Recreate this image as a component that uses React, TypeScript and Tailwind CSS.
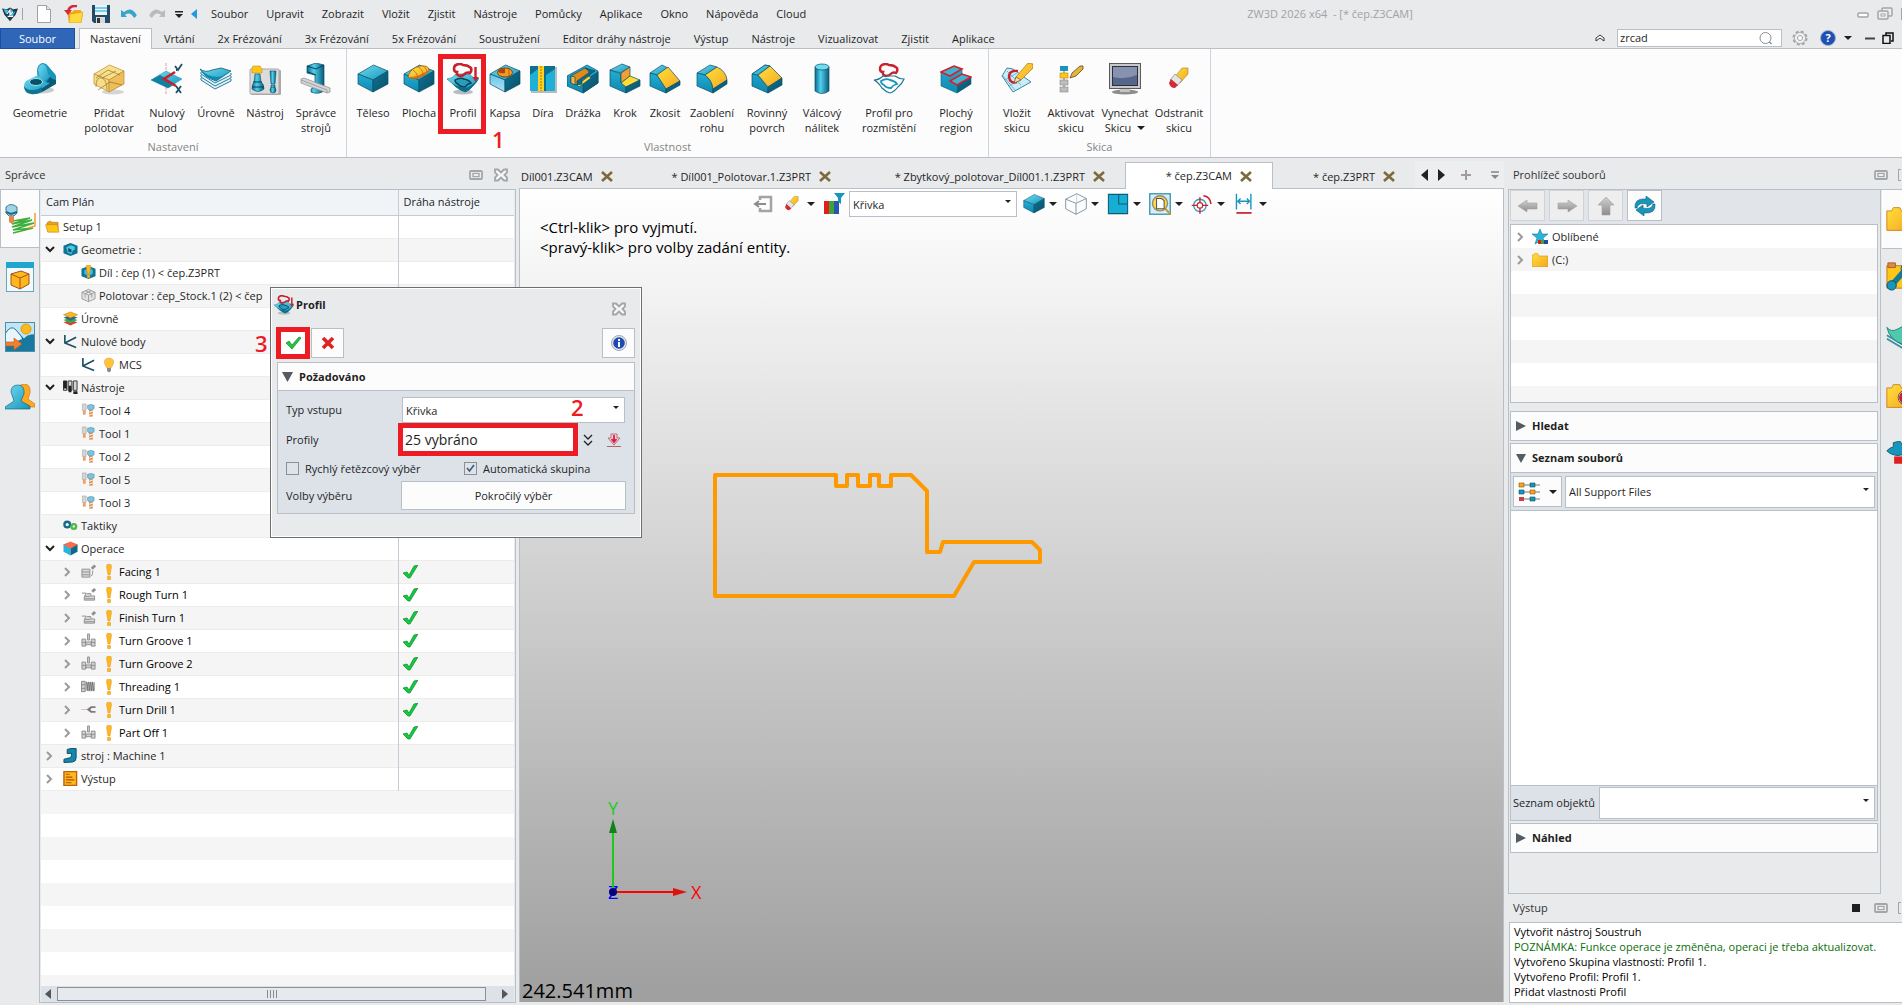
import type { ReactNode } from 'react';

type P = { children?: ReactNode };

/* ---------- shared drawing helpers ---------- */

const Defs = () => (
  <svg className="absolute h-0 w-0" aria-hidden="true">
    <defs>
      <linearGradient id="top" x1="0" y1="0" x2="1" y2="1">
        <stop offset="0" stopColor="#6fdcf2" />
        <stop offset="1" stopColor="#1795ba" />
      </linearGradient>
      <linearGradient id="left" x1="0" y1="0" x2="0" y2="1">
        <stop offset="0" stopColor="#22aed4" />
        <stop offset="1" stopColor="#1187ae" />
      </linearGradient>
      <linearGradient id="right" x1="0" y1="0" x2="1" y2="1">
        <stop offset="0" stopColor="#0f7394" />
        <stop offset="1" stopColor="#0a5068" />
      </linearGradient>
      <linearGradient id="light" x1="0" y1="0" x2="0" y2="1">
        <stop offset="0" stopColor="#5fc6e6" />
        <stop offset="1" stopColor="#b5e0f4" />
      </linearGradient>
      <linearGradient id="gold" x1="0" y1="0" x2="1" y2="1">
        <stop offset="0" stopColor="#ffe13c" />
        <stop offset="1" stopColor="#f5a623" />
      </linearGradient>
      <linearGradient id="pipe" x1="0" y1="0" x2="1" y2="0">
        <stop offset="0" stopColor="#0a6a8a" />
        <stop offset="0.4" stopColor="#4fd0ee" />
        <stop offset="1" stopColor="#0a5a78" />
      </linearGradient>
      <linearGradient id="grey" x1="0" y1="0" x2="0" y2="1">
        <stop offset="0" stopColor="#cfcfcf" />
        <stop offset="1" stopColor="#8d8d8d" />
      </linearGradient>
    </defs>
  </svg>
);

const Ico = ({ children, size = 'size-8' }: P & { size?: string }) => (
  <svg viewBox="0 0 32 32" className={`${size} shrink-0`} aria-hidden="true">
    {children}
  </svg>
);

const Cube = ({ top = 'url(#top)', left = 'url(#left)', right = 'url(#right)', line = '#0a4e68', children }: P & {
  top?: string; left?: string; right?: string; line?: string;
}) => (
  <g stroke={line} strokeWidth="0.7" strokeLinejoin="round">
    <polygon points="16.5,2 31,8 16,17 1,11" fill={top} />
    <polygon points="1,11 16,17 16,29 1,21" fill={left} />
    <polygon points="16,17 31,8 31,21 16,29" fill={right} />
    {children}
  </g>
);

const Caret = ({ className = '' }: { className?: string }) => (
  <svg viewBox="0 0 8 4" className={`h-1 w-2 shrink-0 ${className}`} aria-hidden="true">
    <path d="M0 0h8L4 4z" fill="#1f1f1f" />
  </svg>
);

const Loop = ({ w = 2.2 }: { w?: number }) => (
  <path d="M9 2q4-2 7 0 5 0 8 3 1 3-1 5-2-1-4 0-3 3-6 3-4-1-3-4-3 0-3-3 0-3 2-4z" fill="none" stroke="#c8202c" strokeWidth={w} />
);

const profilArt = (
  <>
    <ellipse cx="16" cy="29" rx="10" ry="2.5" fill="#b9bcbe" />
    <path d="M0 16q5 0 9-5l13 0q4 5 10 4-2 4-6 8-4 5-8 6-4-1-9-5Q4 19 0 16z" fill="url(#top)" stroke="#0f6e8c" strokeWidth="0.6" />
    <path d="M0 16q9 8 18 9 6-1 14-10-2 4-6 8-4 5-8 6-4-1-9-5Q4 19 0 16z" fill="#0c6c8c" />
    <path d="M8 17q5-3 9-1 5 1 7 4-4 1-6 4-5 0-7-3-3-1-3-4z" fill="#2a9dbd" stroke="#0a4258" strokeWidth="1.4" />
    <Loop w={2.600} />
    <path d="M28.500 4v11" stroke="#c8202c" strokeWidth="2.400" />
    <path d="M25.500 14h6l-3 5z" fill="#c8202c" />
  </>
);

/* ---------- ribbon icons ---------- */

const art: Record<string, ReactNode> = {
  geometrie: (
    <>
      <ellipse cx="16" cy="27" rx="14" ry="3.500" fill="#c9cccd" />
      <path d="M13 8q0-6 5-8 4 0 6 3l7 8q2 3 1 9l-12 8-6-9z" fill="#1795ba" />
      <path d="M14 7q1-6 5-6 3 1 4 5 0 4 3 8l-9 6z" fill="url(#top)" />
      <path d="M26 14q3 3 6 3v4L18 29v-4z" fill="#0a5a78" />
      <path d="M2 18l12-6q6 8 12 8l-9 6q-5 4-11 3-6-1-6-6 0-3 2-5z" fill="url(#top)" />
      <path d="M0 23q2 4 8 4 6 0 10-3v5q-6 3-11 2-7-1-7-8z" fill="#0f7394" />
      <ellipse cx="12" cy="19" rx="6.500" ry="3.500" fill="#0a5068" stroke="#9be3f5" />
    </>
  ),
  pridat: (
    <>
      <ellipse cx="20" cy="29" rx="11" ry="2.500" fill="#d5d5d5" />
      <Cube top="#fbe08c" left="#fbdc84" right="#eebd5c" line="#b98b2e">
        <path d="M3 24q0-11 6-9 5 2 5 12M3 15l12-8 12 5M9 15l14-7M5 27l12-8 12 3" fill="none" stroke="#8a7430" />
      </Cube>
    </>
  ),
  nulovy: (
    <>
      <path d="M15 0v32" stroke="#dda0a0" strokeDasharray="3 1" />
      <polygon points="0,17 15,8 31,16 17,25" fill="url(#top)" stroke="#1795ba" strokeWidth="0.5" />
      <polygon points="0,17 9,12 24,21 17,25" fill="#157f9f" />
      <path d="M24 9l-11 7 12 7" fill="none" stroke="#c8202c" strokeWidth="2.600" />
      <path d="M24 3l3 4 4-6M26 7l-1 0M25 23l5 7m0-7l-5 7" stroke="#1d4f66" strokeWidth="1.800" fill="none" />
    </>
  ),
  urovne: (
    <>
      {[15, 12, 9].map((y) => (
        <path key={y} d={`M1 ${y}v2l14 9 16-8v-2`} fill="#dff3f9" stroke="#2b7d99" />
      ))}
      <path d="M0 6q5 4 12 1l9-2 10 3-15 10Q5 14 0 6z" fill="url(#top)" stroke="#0a5a78" strokeWidth="0.8" />
      <path d="M0 6q4 9 16 12l15-10q-8 6-14 6Q6 13 0 6z" fill="#1188aa" />
    </>
  ),
  nastroj: (
    <>
      <rect x="2" y="7" width="30" height="25" rx="1" fill="#aaa" />
      <rect x="1" y="6" width="29" height="25" rx="1" fill="#dcdcdc" stroke="#a8a8a8" />
      <path d="M3 5q0-2 2-2h6l2 3v4H3z" fill="#ffc61a" stroke="#c98a12" strokeWidth="0.6" />
      <path d="M6 11h5l1 8q3 2 3 7-6 5-12 0 0-5 2-7z" fill="url(#pipe)" stroke="#0a4e68" strokeWidth="0.6" />
      <path d="M4 19h9M3 24h12" stroke="#083f52" />
      <path d="M21 8h6l-1 13h-4zM22 22h4v3h-4z" fill="url(#pipe)" stroke="#0a4e68" strokeWidth="0.6" />
      <circle cx="24" cy="27" r="3" fill="url(#pipe)" stroke="#0a4e68" strokeWidth="0.6" />
    </>
  ),
  spravce: (
    <>
      <path d="M7 3l9-3 8 2v26q-6 4-13 1v-3l4-2V12l-8-2z" fill="url(#pipe)" stroke="#0a4e68" strokeWidth="0.7" />
      <path d="M7 3l9 3 8-4M8 9l8 3" stroke="#083f52" fill="none" />
      <path d="M1 16l3-1 26 10v4l-3 1L1 20z" fill="#d5d5d5" stroke="#8a8a8a" strokeWidth="0.7" />
      <path d="M1 17l26 10v3" fill="none" stroke="#a0a0a0" />
    </>
  ),
  teleso: <Cube />,
  plocha: (
    <Cube>
      <path d="M5 14q2-9 12-11 9-1 9 4 0 3-8 7-8 3-13 0z" fill="url(#gold)" stroke="#9a4d0a" />
      <path d="M26 7q0 3-8 7-8 3-13 0 9 0 13-3 5-2 8-4z" fill="#d9741a" stroke="none" />
      <path d="M10 7q4 2 5 8M15 4q5 2 5 9M20 3q4 2 4 6" stroke="#b8620f" fill="none" />
    </Cube>
  ),
  profil: profilArt,
  kapsa: (
    <Cube left="url(#light)">
      <ellipse cx="16" cy="9.500" rx="7.500" ry="4.500" fill="#f39a1f" stroke="#8a3f0a" strokeWidth="1" />
      <path d="M9 9q1-4 7-4v5q-4 1-7-1z" fill="#a54a10" stroke="none" />
      <path d="M20 6v7" stroke="#a54a10" />
    </Cube>
  ),
  dira: (
    <>
      <rect x="4" y="4" width="26" height="26" fill="#b9bcbe" />
      <rect x="3" y="3" width="25" height="25" fill="#0d708f" />
      <path d="M3 12l8-6v22H3zM19 12l9-6v22h-9z" fill="#1fb0d8" />
      <rect x="11" y="3" width="6" height="25" fill="#ffd21f" />
      <path d="M14 3v25" stroke="#a4700f" strokeDasharray="2 1" />
    </>
  ),
  drazka: (
    <g stroke="#0a4e68" strokeWidth="0.700">
      <path d="M0 13L20 2l11 6v12l-15 10L0 23z" fill="url(#left)" />
      <path d="M31 9v11L16 30V19z" fill="url(#right)" />
      <path d="M4 13l14-8 4 2v7l-12 8-6-2z" fill="#e08a1c" />
      <path d="M4 13l4 1v8l-4-2z" fill="#f9b63a" />
      <path d="M10 22l12-9 2 2-12 9z" fill="#ffd83a" />
      <path d="M18 5l10 3-13 9v4l-5 1v-4l13-9z" fill="#0f6a88" />
    </g>
  ),
  krok: (
    <g stroke="#0a4e68" strokeWidth="0.700">
      <path d="M1 7l12-6 8 3-9 6z" fill="url(#top)" />
      <path d="M1 7l11 4v8l5 2v9L1 23z" fill="url(#left)" />
      <path d="M12 10l9-6v9l-9 7z" fill="#f0a030" />
      <path d="M12 20l9-7 10 4-14 7z" fill="#ffdc32" />
      <path d="M17 24l14-7v6l-14 7z" fill="url(#right)" />
    </g>
  ),
  zkosit: (
    <g stroke="#0a4e68" strokeWidth="0.700">
      <path d="M1 10l12-8 6 3-11 7z" fill="url(#top)" />
      <path d="M1 10l7 2 9 13v5L1 23z" fill="url(#left)" />
      <path d="M8 12l11-8 12 14-14 8z" fill="url(#gold)" />
      <path d="M17 26l14-8v4l-14 8z" fill="url(#right)" />
    </g>
  ),
  zaobleni: (
    <g stroke="#0a4e68" strokeWidth="0.700">
      <path d="M1 10l13-8 7 2-12 8z" fill="url(#top)" />
      <path d="M1 10l8 2q7 5 8 14v4L1 23z" fill="url(#left)" />
      <path d="M9 12l12-8q9 4 10 13l-14 9q-1-9-8-14z" fill="url(#gold)" />
      <path d="M17 26l14-9v4l-14 9z" fill="url(#right)" />
    </g>
  ),
  rovinny: (
    <g stroke="#0a4e68" strokeWidth="0.700">
      <path d="M1 11l13-9 5 1L7 12l10 13v5L1 23z" fill="url(#left)" />
      <path d="M1 11l13-9 5 1L7 12z" fill="url(#top)" />
      <path d="M7 12l12-9 12 12-14 9z" fill="url(#gold)" />
      <path d="M17 24l14-9v7l-14 8z" fill="url(#right)" />
    </g>
  ),
  valcovy: (
    <>
      <path d="M9 4v24q7 5 14 0V4z" fill="url(#pipe)" stroke="#0a4e68" strokeWidth="0.700" />
      <ellipse cx="16" cy="4" rx="7" ry="3" fill="#6fdcf2" stroke="#0a4e68" strokeWidth="0.700" />
    </>
  ),
  rozmisteni: (
    <>
      <Loop w={2.400} />
      <path d="M1 17q5 0 9-4h12q4 3 9 3-2 5-6 8-4 5-8 6-4-1-8-5-4-6-8-8z" fill="none" stroke="#1b7896" strokeWidth="1.200" />
      <path d="M8 18q5-3 9-1 5 1 7 4-4 1-6 4-5 0-7-3-3-1-3-4z" fill="none" stroke="#1795ba" strokeWidth="1.800" />
    </>
  ),
  plochy: (
    <>
      <path d="M1 9l13-6 8 3v5l9 3v7l-14 9L1 23z" fill="url(#left)" stroke="#0a5a78" strokeWidth="0.600" />
      <path d="M17 22l14-8v7l-14 9z" fill="url(#right)" />
      <path d="M1 9l13-6 8 3-12 7zM10 18l12-7 9 3-14 8z" fill="#3cb4d2" stroke="#d8202c" strokeWidth="1.600" />
    </>
  ),
  vlozit: (
    <>
      <path d="M1 13l5-8 6 1 18 13-18 10z" fill="#c9ecf8" stroke="#3a87a2" />
      <path d="M4 17l12-7M8 23l14-9M6 8l14 14M2 13l12 14" stroke="#6fb8d0" fill="none" />
      <path d="M17 8q-9-1-9 6 1 7 8 5" fill="none" stroke="#c8202c" strokeWidth="2.400" />
      <path d="M27 0l5 1v4L20 17l-7 3 2-6z" fill="url(#gold)" stroke="#b36b12" strokeWidth="0.700" />
      <path d="M13 20l2-6 5 3z" fill="#f5dcb0" stroke="#5b4a2a" strokeWidth="0.600" />
    </>
  ),
  aktivovat: (
    <>
      <path d="M9 3v26" stroke="#6d6d6d" />
      <rect x="5" y="3" width="8" height="5" fill="#1795ba" />
      <rect x="5" y="10" width="8" height="5" fill="#ffc61a" stroke="#b88410" strokeWidth="0.600" />
      <rect x="5" y="17" width="8" height="5" fill="#bdbdbd" stroke="#8b8b8b" strokeWidth="0.600" />
      <rect x="5" y="24" width="8" height="5" fill="#bdbdbd" stroke="#8b8b8b" strokeWidth="0.600" />
      <path d="M25 3h3v3l-7 7-6 2 2-5z" fill="#e3b53a" stroke="#5b4a1a" strokeWidth="0.800" />
    </>
  ),
  vynechat: (
    <>
      <ellipse cx="16" cy="29" rx="13" ry="2.500" fill="#8d8d8d" />
      <path d="M11 25h10v4H11z" fill="#c4c4c4" />
      <rect x="0.500" y="0.500" width="31" height="25" fill="#c9c9c9" stroke="#5a5a5a" />
      <rect x="3.500" y="3.500" width="25" height="19" fill="#56658a" stroke="#2c3040" />
      <path d="M4 4h24v8q-12 5-24 2z" fill="#8792ae" />
    </>
  ),
  odstranit: (
    <>
      <path d="M19 5h6v6l-8 9-6-5z" fill="url(#gold)" stroke="#a8801c" strokeWidth="0.600" />
      <path d="M12 11l7 6-5 6-7-6z" fill="#e4e4e4" stroke="#777" strokeWidth="0.600" />
      <path d="M8 16l7 6-3 3q-5 0-6-5z" fill="#d02c38" />
    </>
  ),
};

type Tool = { icon: string; label: string[]; w: string; marked?: boolean; menu?: boolean };

const groups: { name: string; tools: Tool[]; w: string }[] = [
  {
    name: 'Nastavení',
    w: 'w-[347px]',
    tools: [
      { icon: 'geometrie', label: ['Geometrie'], w: 'w-20' },
      { icon: 'pridat', label: ['Přidat', 'polotovar'], w: 'w-[58px]' },
      { icon: 'nulovy', label: ['Nulový', 'bod'], w: 'w-[58px]' },
      { icon: 'urovne', label: ['Úrovně'], w: 'w-10' },
      { icon: 'nastroj', label: ['Nástroj'], w: 'w-[58px]' },
      { icon: 'spravce', label: ['Správce', 'strojů'], w: 'w-11' },
    ],
  },
  {
    name: 'Vlastnost',
    w: 'w-[642px]',
    tools: [
      { icon: 'teleso', label: ['Těleso'], w: 'w-[52px]' },
      { icon: 'plocha', label: ['Plocha'], w: 'w-10' },
      { icon: 'profil', label: ['Profil'], w: 'w-12', marked: true },
      { icon: 'kapsa', label: ['Kapsa'], w: 'w-9' },
      { icon: 'dira', label: ['Díra'], w: 'w-10' },
      { icon: 'drazka', label: ['Drážka'], w: 'w-10' },
      { icon: 'krok', label: ['Krok'], w: 'w-11' },
      { icon: 'zkosit', label: ['Zkosit'], w: 'w-9' },
      { icon: 'zaobleni', label: ['Zaoblení', 'rohu'], w: 'w-[58px]' },
      { icon: 'rovinny', label: ['Rovinný', 'povrch'], w: 'w-[52px]' },
      { icon: 'valcovy', label: ['Válcový', 'nálitek'], w: 'w-[58px]' },
      { icon: 'rozmisteni', label: ['Profil pro', 'rozmístění'], w: 'w-[76px]' },
      { icon: 'plochy', label: ['Plochý', 'region'], w: 'w-[58px]' },
    ],
  },
  {
    name: 'Skica',
    w: 'w-[222px]',
    tools: [
      { icon: 'vlozit', label: ['Vložit', 'skicu'], w: 'w-14' },
      { icon: 'aktivovat', label: ['Aktivovat', 'skicu'], w: 'w-[52px]' },
      { icon: 'vynechat', label: ['Vynechat', 'Skicu'], w: 'w-14', menu: true },
      { icon: 'odstranit', label: ['Odstranit', 'skicu'], w: 'w-[52px]' },
    ],
  },
];

/* ---------- title bar, tabs, ribbon ---------- */

const menus = ['Soubor', 'Upravit', 'Zobrazit', 'Vložit', 'Zjistit', 'Nástroje', 'Pomůcky', 'Aplikace', 'Okno', 'Nápověda', 'Cloud'];
const tabs = ['Nastavení', 'Vrtání', '2x Frézování', '3x Frézování', '5x Frézování', 'Soustružení', 'Editor dráhy nástroje', 'Výstup', 'Nástroje', 'Vizualizovat', 'Zjistit', 'Aplikace'];

const CloseGlyph = ({ className = '' }: { className?: string }) => (
  <svg viewBox="0 0 16 14" className={`h-3.5 w-4 shrink-0 ${className}`} aria-hidden="true">
    <path d="M2 1.500h3l3 3 3-3h3v3L11.500 7 14 9.500v3h-3l-3-3-3 3H2v-3L4.500 7 2 4.500z" fill="#f6f6f6" stroke="#a3a6a9" strokeWidth="1.800" />
  </svg>
);

const PinGlyph = () => (
  <svg viewBox="0 0 14 10" className="h-2.5 w-3.5 shrink-0" aria-hidden="true">
    <rect x="1" y="1" width="12" height="8" rx="1" fill="#eee" stroke="#a3a6a9" strokeWidth="1.800" />
    <rect x="4" y="3.500" width="6" height="3" fill="#fff" stroke="#a3a6a9" strokeWidth="1.400" />
  </svg>
);

const TitleBar = () => (
  <header className="flex h-7 shrink-0 items-center">
    <div className="flex w-[203px] shrink-0 items-center pl-0.5">
      <svg viewBox="0 0 20 18" className="mr-1 h-[18px] w-4" aria-hidden="true">
        <path d="M0 2l6 1 4-2 4 2 6-1-3 8-7 8-7-8z" fill="#1f3a4d" />
        <path d="M2 3l6 1-3 5zM9 7l4-5v7l4-4-4 8-3-3z" fill="#38c4ec" />
        <path d="M6 9l4-5v6l4-4M7 12h7" stroke="#fff" strokeWidth="1.500" fill="none" />
      </svg>
      <span className="h-3 w-px bg-[#a3a6a9]" />
      <button aria-label="Nový" className="ml-3.5">
        <svg viewBox="0 0 14 18" className="h-[18px] w-3.5"><path d="M.5.500h9l4 4v13H.5z" fill="#fff" stroke="#9aa3ab" /><path d="M9.500.500v4h4" fill="#dfe5ea" stroke="#9aa3ab" /></svg>
      </button>
      <button aria-label="Otevřít" className="ml-3">
        <svg viewBox="0 0 20 18" className="h-[18px] w-5">
          <path d="M4 7h5l2-2h7v12H6z" fill="#f5a623" />
          <path d="M7 9l13-2-2 11H6z" fill="#ffd83a" stroke="#d99214" strokeWidth="0.600" />
          <path d="M14 1Q6 0 5 7" fill="none" stroke="#d02c38" strokeWidth="2.500" /><path d="M1 5l4 5 4-5z" fill="#d02c38" />
        </svg>
      </button>
      <button aria-label="Uložit" className="ml-2">
        <svg viewBox="0 0 20 20" className="size-5">
          <path d="M1 1h18v18H3l-2-2z" fill="#244a66" />
          <rect x="4" y="1" width="12" height="10" fill="#e9f3f8" /><path d="M4 4h12M4 7h12" stroke="#56c2e0" strokeWidth="1.500" />
          <rect x="5" y="13" width="9" height="6" fill="#d5d9dc" /><rect x="6" y="14" width="3" height="5" fill="#333" />
        </svg>
      </button>
      <button aria-label="Zpět" className="ml-2.5">
        <svg viewBox="0 0 16 10" className="h-2.5 w-4"><path d="M0 1v7h6L4 6q5-4 9 3 4-2 2-4Q10-3 3 3z" fill="#3aa5cc" /></svg>
      </button>
      <button aria-label="Znovu" className="ml-3">
        <svg viewBox="0 0 16 10" className="h-2.5 w-4"><path d="M16 1v7h-6l2-2Q7 2 3 9-1 7 1 5 6-3 13 3z" fill="#b8bcbf" /></svg>
      </button>
      <svg viewBox="0 0 8 7" className="ml-2.5 h-[7px] w-2" aria-hidden="true"><path d="M0 0h8v1.500H0zM0 3h8L4 7z" fill="#222" /></svg>
      <svg viewBox="0 0 6 10" className="ml-2 h-2.5 w-1.5" aria-hidden="true"><path d="M6 0v10L0 5z" fill="#1e9be0" /></svg>
    </div>
    <nav className="flex shrink-0 gap-[18px] pl-2">
      {menus.map((m) => <button key={m}>{m}</button>)}
    </nav>
    <div className="grow pl-48 text-center whitespace-pre text-[#a0a3a6]">ZW3D 2026 x64  - [* čep.Z3CAM]</div>
    <div className="flex w-[240px] shrink-0 items-center justify-end gap-2">
      <svg viewBox="0 0 12 6" className="mt-0.5 h-1.5 w-3"><rect x="1" y="1" width="10" height="4" rx="1" fill="#fff" stroke="#a3a6a9" strokeWidth="1.500" /></svg>
      <svg viewBox="0 0 16 14" className="h-3.5 w-4">
        <rect x="5" y="1" width="10" height="8" rx="1" fill="#eee" stroke="#a3a6a9" strokeWidth="1.500" />
        <rect x="1" y="4" width="10" height="8" rx="1" fill="#eee" stroke="#a3a6a9" strokeWidth="1.500" />
        <rect x="4" y="7" width="4" height="2" fill="#fff" stroke="#a3a6a9" />
      </svg>
      <span className="h-3 w-px bg-[#a3a6a9]" />
    </div>
  </header>
);

const TabBar = () => (
  <div className="flex h-[21px] shrink-0 border-b border-[#b9bfc6]">
    <button className="mr-1 h-[21px] w-[75px] border border-[#1d4fa8] bg-[#2f66b8] text-white">Soubor</button>
    {tabs.map((t, i) => (
      <button key={t} className={i === 0 ? 'mr-px h-[21px] border border-b-0 border-[#b9bfc6] bg-[#fcfcfc] px-2.5' : 'pt-0.5 pr-3 pl-[11px]'}>
        {t}
      </button>
    ))}
    <div className="ml-auto flex items-center">
      <svg viewBox="0 0 10 8" className="mr-3 h-2 w-2.5"><path d="M1 4l4-3 4 3v3L5 4 1 7z" fill="#fff" stroke="#333" /></svg>
      <label className="flex h-[18px] w-[165px] items-center border border-[#b9bfc6] bg-white pr-2">
        <input aria-label="Hledat" defaultValue="zrcad" className="w-full min-w-0 px-0.5 outline-none" />
        <svg viewBox="0 0 14 13" className="h-[13px] w-3.5 shrink-0"><circle cx="6.500" cy="6" r="5.500" fill="none" stroke="#8b8f93" /><path d="M10.500 10l2 2" stroke="#5aa" strokeWidth="1.600" /></svg>
      </label>
      <svg viewBox="0 0 16 16" className="ml-2.5 size-4">
        <circle cx="8" cy="8" r="6.500" fill="none" stroke="#a3a3a3" strokeWidth="2" strokeDasharray="3 2.100" />
        <circle cx="8" cy="8" r="5.500" fill="#f2f2f2" stroke="#a3a3a3" strokeWidth="0.800" /><circle cx="8" cy="8" r="2.500" fill="#fff" stroke="#a3a3a3" />
      </svg>
      <span className="ml-3 flex size-4 items-center justify-center rounded-full border border-[#9fb0c8] bg-[#1f4fb4] font-bold text-white">?</span>
      <Caret className="ml-2" />
      <svg viewBox="0 0 12 12" className="ml-3 size-3"><path d="M1 6.500h10" stroke="#444" strokeWidth="2" /></svg>
      <svg viewBox="0 0 12 12" className="mr-2 ml-1.5 size-3"><path d="M4 3V1h7v8H9M1 3.500h7v8H1z" fill="none" stroke="#111" strokeWidth="1.500" /></svg>
    </div>
  </div>
);

const Ribbon = () => (
  <div className="flex h-[109px] shrink-0 border-b border-[#b9bfc6] bg-[#fcfcfc]">
    {groups.map((g) => (
      <section key={g.name} className={`${g.w} flex shrink-0 flex-col justify-between border-r border-[#cfd4d9] pt-3.5`}>
        <div className="flex">
          {g.tools.map((t) => (
            <button key={t.icon} className={`${t.w} relative flex shrink-0 flex-col items-center`}>
              <Ico>{art[t.icon]}</Ico>
              <span className="mt-2.5 flex flex-col items-center leading-[15px] whitespace-nowrap">
                {t.label.map((l, i) => (
                  <span key={l} className="flex items-center gap-1.5">
                    {l}
                    {t.menu && i === 1 && <Caret />}
                  </span>
                ))}
              </span>
              {t.marked && <span className="absolute -top-[9px] -left-px h-20 w-12 border-[5px] border-[#ed1c24]" />}
              {t.marked && <span className="absolute top-[62px] left-[53px] text-[22px] leading-7 font-semibold text-[#ed1c24]">1</span>}
            </button>
          ))}
        </div>
        <h2 className="pb-0.5 text-center leading-4 text-[#858585]">{g.name}</h2>
      </section>
    ))}
  </div>
);

/* ---------- manager tree ---------- */

const chevron = (open: boolean) =>
  open ? (
    <svg viewBox="0 0 10 7" className="h-[7px] w-2.5"><path d="M1 1l4 4 4-4" fill="none" stroke="#1f1f1f" strokeWidth="2" /></svg>
  ) : (
    <svg viewBox="0 0 7 10" className="ml-px h-2.5 w-[7px]"><path d="M1 1l4 4-4 4" fill="none" stroke="#9b9b9b" strokeWidth="2" /></svg>
  );

const axes = <path d="M4 2v17l24 10M4 19L28 7" fill="none" stroke="#1d4f66" strokeWidth="3.500" />;
const mill = (
  <>
    <path d="M3 2h8v14H3z" fill="#d5d5d5" stroke="#999" />
    <path d="M4 16h6v9H4z" fill="#e8a070" />
    <path d="M14 5q7-4 14 0v6l-3 4h-8l-3-4z" fill="#7cc3dc" stroke="#3d7b92" />
    <path d="M17 15h8v14h-8z" fill="#e08a4a" />
    <path d="M17 20l8-3M17 26l8-3" stroke="#fff" strokeWidth="2" />
  </>
);
const face = (
  <g stroke="#8f8f8f" strokeWidth="2" fill="#d9d9d9">
    <path d="M2 11h17v17H2zM2 17h17M2 23h17" />
    <path d="M22 26q4-4 3-12" fill="none" /><path d="M23 10l7-7" strokeWidth="6" />
  </g>
);
const turn = (
  <g stroke="#8f8f8f" strokeWidth="2" fill="#d9d9d9">
    <path d="M2 13h9l-4 8v7h22v-9h-8v-5h-8M8 25h20M8 20h12" />
    <path d="M24 10l6-6" strokeWidth="6" />
  </g>
);
const groove = (
  <g stroke="#8f8f8f" strokeWidth="2" fill="#d0d0d0">
    <path d="M2 13h8v15H2zM22 13h8v15h-8zM10 19h12v6H10zM14 2h4v13h-4zM2 20h8M22 20h8" />
  </g>
);

const small: Record<string, ReactNode> = {
  folder: (
    <>
      <path d="M4 8l6-4 6 3h12v20H6z" fill="#e8a020" stroke="#a86a10" />
      <path d="M1 12h25l4 16H6z" fill="#ffc61a" stroke="#b87812" />
    </>
  ),
  geom: (
    <>
      <path d="M1 8l15-6 15 6v16l-15 6-15-6z" fill="#0f7394" />
      <path d="M7 11l10-4 8 3v6l-4 2-3 8-8-3z" fill="#4fc8e6" /><path d="M11 13l7 3v7l-7-3z" fill="#0b5672" />
    </>
  ),
  part: (
    <>
      <path d="M1 8l15-6 15 6v16l-15 6-15-6z" fill="#0f7394" />
      <path d="M7 11l10-4 8 3v9l-9 4-9-4z" fill="#3cc0e0" />
      <path d="M12 0h8l1 4-3 15h-4L11 4zM13 21h6v6h-6z" fill="#ffb81c" stroke="#d98a0a" />
    </>
  ),
  stock: <path d="M2 9l14-6 14 6v14l-14 6-14-6zM2 9l14 6 14-6M16 15v14M9 6l14 6v8M22 6L9 12v8" fill="#e2e2e2" stroke="#9b9b9b" strokeWidth="2" />,
  levels: (
    <>
      <path d="M1 24l15-5 15 5-15 7z" fill="#d8402a" /><path d="M1 19l15-5 15 5-15 7z" fill="#35a852" />
      <path d="M1 14l15-5 15 5-15 7z" fill="#2a6a90" /><path d="M1 8l15-6 15 6-15 7z" fill="#ffb81c" stroke="#a86a10" />
    </>
  ),
  axes,
  tools: (
    <>
      <path d="M1 2h7v20H1zM11 2h8v20h-8zM22 2h8v20h-8z" fill="#d6d6d6" stroke="#333" strokeWidth="2" />
      <path d="M1 2h7v16H1zM12 12h6v14h-6zM22 24h9v6h-9z" fill="#222" />
    </>
  ),
  mill,
  tactics: (
    <>
      <circle cx="9" cy="14" r="6" fill="none" stroke="#146c88" strokeWidth="5" />
      <circle cx="23" cy="18" r="5" fill="none" stroke="#4cb848" strokeWidth="5" />
    </>
  ),
  operace: (
    <>
      <path d="M1 8l15-6 15 6-15 8z" fill="#ff6a4a" stroke="#b8402a" />
      <path d="M1 8l15 8v15L1 23z" fill="#2ab4dc" /><path d="M31 8l-15 8v15l15-8z" fill="#0f6a8a" />
    </>
  ),
  facing: face,
  rough: turn,
  groove,
  thread: (
    <>
      <path d="M1 5h8v22H1zM1 12h8M1 20h8" fill="#ccc" stroke="#888" strokeWidth="2" />
      <path d="M10 7h20v18H10z" fill="#b0b0b0" /><path d="M12 6l3 20m1-20l3 20m1-20l3 20m1-20l3 20" stroke="#6d6d6d" strokeWidth="2" />
    </>
  ),
  drill: (
    <>
      <path d="M1 16h13" stroke="#e8b8a0" strokeWidth="2" />
      <path d="M12 16l9-7h10v4h-8l-3 3 3 3h8v4H21z" fill="#7d7d7d" />
    </>
  ),
  machine: <path d="M9 3l8-2h11v20q0 8-8 9L2 31v-7l12-3q4-1 4-5v-5l-9 1z" fill="#1488ab" stroke="#0a4e68" strokeWidth="2" />,
  output: (
    <>
      <path d="M2 1h27v30H2z" fill="#ffb81c" stroke="#c0600a" strokeWidth="3" />
      <path d="M6 7h8M6 13h14M6 19h18M6 25h12" stroke="#b0500a" strokeWidth="2.500" />
    </>
  ),
  bulb: (
    <>
      <path d="M16 2q11 1 9 11l-4 8H11l-4-8Q5 3 16 2z" fill="#ffc23a" stroke="#e09a1a" />
      <path d="M12 22h8v6l-4 3-4-3z" fill="#8d8d8d" />
    </>
  ),
  warn: <path d="M12 1h8l1 4-3 17h-4L11 5zM13 25h6v6h-6z" fill="#ffb81c" stroke="#e0901a" />,
};

type Row = { label: string; icon: string; depth: number; open?: boolean; flag?: string; done?: boolean };

const rows: Row[] = [
  { label: 'Setup 1', icon: 'folder', depth: 0 },
  { label: 'Geometrie :', icon: 'geom', depth: 1, open: true },
  { label: 'Díl : čep (1) < čep.Z3PRT', icon: 'part', depth: 2 },
  { label: 'Polotovar : čep_Stock.1 (2) < čep', icon: 'stock', depth: 2 },
  { label: 'Úrovně', icon: 'levels', depth: 1 },
  { label: 'Nulové body', icon: 'axes', depth: 1, open: true },
  { label: 'MCS', icon: 'axes', depth: 2, flag: 'bulb' },
  { label: 'Nástroje', icon: 'tools', depth: 1, open: true },
  { label: 'Tool 4', icon: 'mill', depth: 2 },
  { label: 'Tool 1', icon: 'mill', depth: 2 },
  { label: 'Tool 2', icon: 'mill', depth: 2 },
  { label: 'Tool 5', icon: 'mill', depth: 2 },
  { label: 'Tool 3', icon: 'mill', depth: 2 },
  { label: 'Taktiky', icon: 'tactics', depth: 1 },
  { label: 'Operace', icon: 'operace', depth: 1, open: true },
  { label: 'Facing 1', icon: 'facing', depth: 2, open: false, flag: 'warn', done: true },
  { label: 'Rough Turn 1', icon: 'rough', depth: 2, open: false, flag: 'warn', done: true },
  { label: 'Finish Turn 1', icon: 'rough', depth: 2, open: false, flag: 'warn', done: true },
  { label: 'Turn Groove 1', icon: 'groove', depth: 2, open: false, flag: 'warn', done: true },
  { label: 'Turn Groove 2', icon: 'groove', depth: 2, open: false, flag: 'warn', done: true },
  { label: 'Threading 1', icon: 'thread', depth: 2, open: false, flag: 'warn', done: true },
  { label: 'Turn Drill 1', icon: 'drill', depth: 2, open: false, flag: 'warn', done: true },
  { label: 'Part Off 1', icon: 'groove', depth: 2, open: false, flag: 'warn', done: true },
  { label: 'stroj : Machine 1', icon: 'machine', depth: 1, open: false },
  { label: 'Výstup', icon: 'output', depth: 1, open: false },
];

const DockTitle = ({ title, children }: { title: string } & P) => (
  <div className="flex h-7 shrink-0 items-center justify-between">
    <h2 className="text-[#333]">{title}</h2>
    <div className="flex items-center gap-2.5">{children}</div>
  </div>
);

const SideTabs = () => (
  <div className="flex w-[39px] shrink-0 flex-col">
    <button aria-label="Plán" className="flex h-[58px] items-center justify-center border-b border-l border-[#b9bfc6] bg-[#fcfcfc]">
      <svg viewBox="0 0 32 32" className="size-8">
        <path d="M9 18l17-3-18 6 20-4-20 7 22-4-21 7 20-2-20 5" fill="none" stroke="#3fae3a" strokeWidth="1.600" />
        <path d="M31 10v13l-7 2" fill="none" stroke="#f0a030" strokeWidth="1.500" />
        <path d="M2 4q5-5 11 0v6l-3 3H5l-3-3z" fill="#9ed3e8" stroke="#3d7b92" /><path d="M2 9l5 2 6-2" fill="none" stroke="#1d6a88" strokeWidth="2" /><path d="M5 13h5v6l-2 2-3-2z" fill="#e08a4a" />
      </svg>
    </button>
    <button aria-label="Model" className="mt-3.5 flex h-[30px] justify-center">
      <svg viewBox="0 0 28 30" className="h-[30px] w-7">
        <rect x="0.500" y="0.500" width="27" height="29" fill="#f2fafd" stroke="#6aa7bd" /><rect width="28" height="6" fill="#1fa6cc" />
        <path d="M5 12l10-3 8 3v10l-9 5-9-4z" fill="#ffb81c" stroke="#a8501a" /><path d="M5 12l9 4 9-4M14 16v11" fill="none" stroke="#a8501a" />
      </svg>
    </button>
    <button aria-label="Scéna" className="mt-[30px] flex h-[30px] justify-center">
      <svg viewBox="0 0 30 30" className="size-[30px]">
        <rect width="30" height="30" fill="#bfe6f5" /><path d="M0 12q6-10 11-4t8 9q4-5 11-4v17H0z" fill="#1779a0" />
        <path d="M0 12q6-10 11-4t6 9q-4 2-8 3l-9 0z" fill="#e8f5fa" />
        <path d="M0 12q6-10 11-4t8 9q4-5 11-4" fill="none" stroke="#2b7d99" /><circle cx="21" cy="7" r="5" fill="#ffb81c" stroke="#e09a1a" />
        <path d="M0 20h9v-4l8 6-8 6v-4H0z" fill="#f08030" stroke="#c05a10" strokeWidth="0.600" />
        <rect x="0.500" y="0.500" width="29" height="29" fill="none" stroke="#4d8ea6" />
      </svg>
    </button>
    <button aria-label="Uživatel" className="mt-8 flex h-[26px] justify-center">
      <svg viewBox="0 0 30 26" className="h-[26px] w-[30px]">
        <path d="M13 8q0-8 6-8 7 0 6 9l-2 6 7 5v3H15z" fill="#ffa820" stroke="#c07010" strokeWidth="0.600" />
        <path d="M6 8q0-7 7-7t6 9l-3 7 9 5v3H0v-2l9-6z" fill="url(#top)" stroke="#0a5a78" strokeWidth="0.600" />
      </svg>
    </button>
  </div>
);

const Manager = () => (
  <aside className="flex w-[519px] shrink-0 flex-col pt-[3px]">
    <div className="pr-2.5 pl-[5px]">
      <DockTitle title="Správce"><PinGlyph /><CloseGlyph /></DockTitle>
    </div>
    <div className="mr-[3px] mb-0.5 flex min-h-0 grow border-t border-r border-[#b9bfc6]">
      <SideTabs />
      <div className="flex min-w-0 grow flex-col border-b border-l border-[#b9bfc6] pr-px pl-px">
        <table className="w-full table-fixed border-collapse text-left">
          <thead>
            <tr className="h-[25px] border-b border-[#c5ccd3] bg-[#f0f4f7]">
              <th className="w-[357px] border-r border-[#c5ccd3] pl-[5px] font-normal">Cam Plán</th>
              <th className="pl-[5px] font-normal">Dráha nástroje</th>
            </tr>
          </thead>
          <tbody>
            {rows.map((r) => (
              <tr key={r.label} className="h-[23px] border-b border-[#ececec] odd:bg-white even:bg-[#f5f5f5]">
                <td className="overflow-hidden border-r border-[#c5ccd3] p-0">
                  <div className={`flex items-center whitespace-nowrap ${r.depth === 2 ? 'pl-[22px]' : 'pl-1'}`}>
                    {r.depth > 0 && <span className="w-[18px] shrink-0">{r.open !== undefined && chevron(r.open)}</span>}
                    <span className="w-[18px] shrink-0"><Ico size="size-[15px]">{small[r.icon]}</Ico></span>
                    {r.flag && <span className="flex w-5 shrink-0 justify-center"><Ico size="size-4">{small[r.flag]}</Ico></span>}
                    <span className={r.flag === 'warn' ? 'text-black' : ''}>{r.label}</span>
                  </div>
                </td>
                <td className="p-0 pl-1">
                  {r.done && (
                    <svg viewBox="0 0 15 14" className="h-3.5 w-[15px]"><path d="M0 8l4-1 2 3 5-9 4-1-8 13H5z" fill="#10cc3c" stroke="#0a8a2a" strokeWidth="0.700" /></svg>
                  )}
                </td>
              </tr>
            ))}
          </tbody>
        </table>
        <div className="grow bg-[repeating-linear-gradient(#f5f5f5_0_23px,#fff_23px_46px)]" />
        <div className="flex h-4 shrink-0 items-center justify-between bg-[#dde2e9] px-1">
          <svg viewBox="0 0 6 10" className="h-2.5 w-1.5"><path d="M6 0v10L0 5z" fill="#555" /></svg>
          <div className="mr-4 ml-1.5 flex h-3.5 grow items-center justify-center gap-0.5 border border-[#8b9096] bg-[#e6e9ed]">
            {[0, 1, 2, 3].map((i) => <span key={i} className="h-2 w-px bg-[#888]" />)}
          </div>
          <svg viewBox="0 0 6 10" className="mr-0.5 h-2.5 w-1.5"><path d="M0 0v10l6-5z" fill="#555" /></svg>
        </div>
      </div>
    </div>
  </aside>
);

/* ---------- viewport ---------- */

const docs = [
  { name: 'Díl001.Z3CAM', w: 'w-[104px] pl-0.5', active: false },
  { name: '* Díl001_Polotovar.1.Z3PRT', w: 'w-[228px] justify-end', active: false },
  { name: '* Zbytkový_polotovar_Díl001.1.Z3PRT', w: 'w-[274px] justify-end', active: false },
  { name: '* čep.Z3CAM', w: 'w-[148px] justify-end', active: true },
  { name: '* čep.Z3PRT', w: 'w-[142px] justify-end', active: false },
];

const DocTabs = () => (
  <div className="flex h-7 shrink-0 border-b border-[#b9bfc6]">
    {docs.map((d) => (
      <div key={d.name} className={`${d.w} flex shrink-0 items-center gap-2 pr-5 whitespace-nowrap ${d.active ? 'mt-px h-[27px] border border-b-0 border-[#b9bfc6] bg-white' : 'pt-1'}`}>
        <span>{d.name}</span>
        <button aria-label={`Zavřít ${d.name}`}>
          <svg viewBox="0 0 12 11" className="h-[11px] w-3"><path d="M1 1l10 9M11 1L1 10" stroke="#7d6a3c" strokeWidth="2.600" /></svg>
        </button>
      </div>
    ))}
    <div className="flex grow items-center bg-[#eceef0] pl-1.5">
      <svg viewBox="0 0 7 12" className="h-3 w-[7px]"><path d="M7 0v12L0 6z" fill="#222" /></svg>
      <svg viewBox="0 0 7 12" className="ml-2.5 h-3 w-[7px]"><path d="M0 0v12l7-6z" fill="#222" /></svg>
      <svg viewBox="0 0 10 10" className="ml-4 size-2.5"><path d="M5 0v10M0 5h10" stroke="#a39c9c" strokeWidth="2" /></svg>
      <svg viewBox="0 0 8 8" className="ml-5 size-2"><path d="M0 1h8" stroke="#a39c9c" strokeWidth="2" /><path d="M0 4h8L4 8z" fill="#8d8686" /></svg>
    </div>
  </div>
);

const viewIcons: ReactNode[] = [
  <Cube key="s" />,
  <g key="w" stroke="#6d8494" strokeWidth="1.200" strokeLinejoin="round">
    <path d="M17 1l14 7v15l-15 8L1 23V9z" fill="#fdfdfd" />
    <path d="M1 9l15 6 15-7M16 15v16" fill="none" />
    <path d="M17 1v14" stroke="#c3ccd2" />
  </g>,
  <g key="l"><path d="M2 2h28v28H2z" fill="#17aed4" stroke="#0a5a78" strokeWidth="1.500" /><path d="M17 2v14h13" fill="none" stroke="#0a5a78" strokeWidth="1.500" /></g>,
  <g key="z">
    <path d="M1 1h30v30H1z" fill="#d9eff7" stroke="#4d9fba" strokeWidth="2.400" />
    <circle cx="16" cy="15" r="11" fill="#ffd83a" stroke="#8b8b8b" strokeWidth="2" /><path d="M11 8h7l4 3v12H11z" fill="#fff" stroke="#555" strokeWidth="1.500" /><path d="M24 23l7 8" stroke="#c79a2a" strokeWidth="3" />
  </g>,
  <g key="t" fill="none">
    <circle cx="13" cy="18" r="9" stroke="#3d9cba" strokeWidth="2" /><circle cx="13" cy="18" r="4" stroke="#c8202c" strokeWidth="1.600" />
    <path d="M13 6v8M13 22v8M1 18h8M17 18h8" stroke="#c8202c" strokeWidth="2" /><path d="M18 4q10 1 11 12" stroke="#c8202c" strokeWidth="2.400" />
  </g>,
  <g key="d" fill="none">
    <path d="M5 1v23M26 1v23M7 12h17M11 8l-4 4 4 4M20 8l4 4-4 4" stroke="#1795ba" strokeWidth="2" />
    <path d="M5 29h22" stroke="#c8202c" strokeWidth="2.500" />
  </g>,
];

const SelectBox = ({ label, value, className = '', id }: { label: string; value: string; className?: string; id?: string }) => (
  <div className={`relative ${className}`}>
    <select id={id} aria-label={label} className="size-full appearance-none border border-[#b9bfc6] bg-white px-[3px] pt-px outline-none">
      <option>{value}</option>
    </select>
    <svg viewBox="0 0 6 3" className="pointer-events-none absolute top-1/2 right-1.5 -mt-1 h-[3px] w-1.5"><path d="M0 0h6L3 3z" fill="#222" /></svg>
  </div>
);

const Viewport = () => (
  <main className="flex min-w-0 grow flex-col pt-[3px]">
    <DocTabs />
    <div className="relative mb-[3px] grow border-r border-l border-[#b9bfc6] bg-linear-to-b from-white to-[#9f9f9f]">
      <div className="flex h-7 items-center pt-0.5 pl-[233px]">
        <svg viewBox="0 0 20 18" className="h-[18px] w-5"><path d="M7 5V2h11v14H7v-3" fill="none" stroke="#a3a3a3" strokeWidth="2.500" /><path d="M13 9H3M6 6L2 9l4 3" fill="none" stroke="#8d8d8d" strokeWidth="2" /></svg>
        <button aria-label="Guma" className="ml-2 flex items-center gap-1"><Ico size="size-[22px]">{art.odstranit}</Ico><Caret /></button>
        <svg viewBox="0 0 22 22" className="mr-1 ml-2 size-[22px]">
          <path d="M1 8h5v13H1z" fill="#e01e1e" /><path d="M6 8h5v13H6z" fill="#3da33a" /><path d="M11 8h5v13h-5z" fill="#2a55b0" />
          <path d="M11 0h11l-4 5v6l-3-2V5z" fill="#1795ba" />
        </svg>
        <SelectBox label="Filtr entit" value="Křivka" className="h-[26px] w-[168px]" />
        <div className="ml-1.5 flex gap-1">
          {viewIcons.map((v, i) => (
            <button key={i} aria-label={`Zobrazení ${i + 1}`} className="flex items-center gap-1 pr-1">
              <Ico size="size-[22px]">{v}</Ico>
              <Caret />
            </button>
          ))}
        </div>
      </div>
      <div className="pl-5 text-[15px] leading-5 text-black">
        <p>&lt;Ctrl-klik&gt; pro vyjmutí.</p>
        <p>&lt;pravý-klik&gt; pro volby zadání entity.</p>
      </div>
      {/* selected profile curve */}
      <svg viewBox="0 0 340 140" className="absolute top-[276px] left-[185px] h-[140px] w-[340px]" aria-hidden="true">
        <path
          d="M10 10H131V21H142V10H153V21H165V10H174V21H186V10H206L222 26V87H235L238 77H327L335 85V97H269L249 131H10z"
          fill="none" stroke="#ff9900" strokeWidth="4" strokeLinejoin="round"
        />
      </svg>
      {/* axis triad */}
      <svg viewBox="0 0 120 130" className="absolute bottom-20 left-[81px] h-[130px] w-[120px] text-[18px]" aria-hidden="true">
        <text x="7" y="107" fill="#0000ff" className="font-['Open_Sans',sans-serif]">Z</text>
        <path d="M12 100V35" stroke="#1fc81f" strokeWidth="2" />
        <path d="M12 27l4 14H8z" fill="#14801a" />
        <path d="M12 100h65" stroke="#ff0000" strokeWidth="2" />
        <path d="M86 100l-14 4v-8z" fill="#e01010" />
        <circle cx="12" cy="100" r="4" fill="#000080" />
        <text x="7" y="23" fill="#22cc22" className="font-['Open_Sans',sans-serif]">Y</text>
        <text x="90" y="107" fill="#ff0000" className="font-['Open_Sans',sans-serif]">X</text>
      </svg>
      <output className="absolute -bottom-[3px] left-0.5 text-[20px] leading-7 text-black">242.541mm</output>
    </div>
  </main>
);

/* ---------- Profil dialog ---------- */

const Mark = ({ children, className }: P & { className: string }) => (
  <span className={`absolute text-[22px] leading-7 font-semibold text-[#ed1c24] ${className}`}>{children}</span>
);

const ProfilDialog = () => (
  <div role="dialog" aria-label="Profil" className="absolute top-[287px] left-[270px] h-[251px] w-[372px] border border-[#6b7076] bg-[#e8eaec] p-[5px] pr-1.5 outline-1 -outline-offset-2 outline-white">
    <Mark className="top-[41px] -left-4">3</Mark>
    <div className="flex h-6 items-center justify-between">
      <h2 className="-ml-0.5 flex items-center gap-0.5 font-bold"><Ico size="size-5">{profilArt}</Ico>Profil</h2>
      <button aria-label="Zavřít" className="mt-2 mr-2"><CloseGlyph /></button>
    </div>
    <div className="flex items-center pt-2.5">
      <button aria-label="OK" className="flex h-8 w-[34px] items-center justify-center border-[5px] border-[#ed1c24] bg-white">
        <svg viewBox="0 0 16 14" className="h-3.5 w-4"><path d="M1 7l3-2 3 4 7-8 2 1-9 11z" fill="#1fc83c" stroke="#138a28" strokeWidth="0.700" /></svg>
      </button>
      <button aria-label="Storno" className="ml-px flex h-[30px] w-[33px] items-center justify-center border border-[#b9bfc6] bg-[#fcfcfc]">
        <svg viewBox="0 0 14 14" className="size-3.5"><path d="M2 2l10 10M12 2L2 12" stroke="#dc2424" strokeWidth="3.600" /></svg>
      </button>
      <button aria-label="Informace" className="ml-auto flex h-[30px] w-[33px] items-center justify-center border border-[#b9bfc6] bg-[#fcfcfc]">
        <svg viewBox="0 0 16 16" className="size-4"><circle cx="8" cy="8" r="7.500" fill="#e4e8f0" stroke="#8b93a3" strokeWidth="0.800" /><circle cx="8" cy="8" r="5.800" fill="#1c4bb0" /><path d="M7 7h2v5H7zM7 4h2v2H7z" fill="#fff" /></svg>
      </button>
    </div>
    <section className="mt-[3px] ml-px border border-[#b9bfc6] bg-[#dde2e9]">
      <h3 className="flex h-7 items-center gap-1.5 border-b border-[#b9bfc6] bg-[#fcfcfc] pl-1 font-bold">
        <svg viewBox="0 0 11 10" className="h-2.5 w-[11px]"><path d="M0 0h11L5.500 10z" fill="#555b62" /></svg>
        Požadováno
      </h3>
      <div className="relative flex h-8 items-end pl-2">
        <label htmlFor="typ" className="w-[116px] leading-[26px]">Typ vstupu</label>
        <SelectBox id="typ" label="Typ vstupu" value="Křivka" className="h-[26px] w-[223px]" />
        <Mark className="top-0.5 left-[293px]">2</Mark>
      </div>
      <div className="flex items-center pl-2">
        <label htmlFor="profily" className="w-28">Profily</label>
        <input id="profily" defaultValue="25 vybráno" className="h-[33px] w-[180px] border-[5px] border-[#ed1c24] bg-white px-0.5 text-[14px] outline-none" />
        <button aria-label="Rozbalit" className="ml-[5px]">
          <svg viewBox="0 0 10 12" className="h-3 w-2.5"><path d="M1 1l4 4 4-4M1 7l4 4 4-4" fill="none" stroke="#222" strokeWidth="1.300" /></svg>
        </button>
        <button aria-label="Vložit výběr" className="ml-3.5">
          <svg viewBox="0 0 14 14" className="size-3.5"><path d="M4 1h6v4h3l-6 7-6-7h3z" fill="#f3d4d7" stroke="#b8707a" /><path d="M7 2v7M4.500 6L7 9l2.500-3" stroke="#d8204c" strokeWidth="1.800" fill="none" /><path d="M0 13.500h14" stroke="#b8606a" /></svg>
        </button>
      </div>
      <div className="flex h-[25px] items-center pl-2">
        <label className="flex w-[178px] items-center gap-1.5">
          <input type="checkbox" className="size-[13px] appearance-none border border-[#8b9096] bg-[#dfe2e6]" />
          Rychlý řetězcový výběr
        </label>
        <label className="relative flex items-center gap-1.5">
          <input type="checkbox" defaultChecked className="peer size-[13px] appearance-none border border-[#8b9096] bg-[#dfe2e6]" />
          <svg viewBox="0 0 9 9" className="absolute left-0.5 hidden size-[9px] peer-checked:block"><path d="M1 4l2.500 3L8 1" fill="none" stroke="#3a5a88" strokeWidth="1.600" /></svg>
          Automatická skupina
        </label>
      </div>
      <div className="flex items-center pb-[3px] pl-2">
        <span className="w-[115px]">Volby výběru</span>
        <button className="h-[29px] w-[225px] border border-[#b9bfc6] bg-[#fcfcfc]">Pokročilý výběr</button>
      </div>
    </section>
  </div>
);

/* ---------- file browser and output ---------- */

const navArrow = (d: string) => (
  <svg viewBox="0 0 20 20" className="size-5"><path d={d} fill="url(#grey)" stroke="#a3a3a3" strokeWidth="0.600" /></svg>
);

const Fold = ({ title, open = false }: { title: string; open?: boolean }) => (
  <h3 className="flex h-[30px] shrink-0 items-center gap-1.5 border border-[#b9bfc6] bg-[#fcfcfc] pl-[5px] font-bold">
    <svg viewBox="0 0 10 10" className="size-2.5"><path d={open ? 'M0 1h10L5 10z' : 'M0 0l10 5-10 5z'} fill="#555b62" /></svg>
    {title}
  </h3>
);

const bigFolder = <path d="M1 6h6l2-4h8l2 4h12v24H1z" fill="url(#gold)" stroke="#c8741a" />;

const log = [
  { text: 'Vytvořit nástroj Soustruh' },
  { text: 'POZNÁMKA: Funkce operace je změněna, operaci je třeba aktualizovat.', note: true },
  { text: 'Vytvořeno Skupina vlastností: Profil 1.' },
  { text: 'Vytvořeno Profil: Profil 1.' },
  { text: 'Přidat vlastnosti Profil' },
];

const FileBrowser = () => (
  <aside className="flex w-[394px] shrink-0 flex-col pt-[3px]">
    <div className="pr-px pl-[5px]">
      <DockTitle title="Prohlížeč souborů"><PinGlyph /><span className="h-3 w-[3px] border border-r-0 border-[#a3a6a9]" /></DockTitle>
    </div>
    <div className="flex grow">
      <div className="flex w-[373px] shrink-0 flex-col border border-[#b9bfc6] bg-[#e8eaec] pl-px">
        <div className="flex h-[34px] shrink-0 items-start gap-1 bg-[#e1e5e9]">
          <button aria-label="Zpět" className="flex h-[31px] w-[35px] items-center justify-center border border-[#d0d3d6] bg-[#eeeeee]">{navArrow('M0 10l9-6v3h10v6H9v3z')}</button>
          <button aria-label="Vpřed" className="flex h-[31px] w-[35px] items-center justify-center border border-[#d0d3d6] bg-[#eeeeee]">{navArrow('M20 10l-9-6v3H1v6h10v3z')}</button>
          <button aria-label="Nahoru" className="flex h-[31px] w-[35px] items-center justify-center border border-[#d0d3d6] bg-[#eeeeee]">{navArrow('M10 1l8 8h-4v10H6V9H2z')}</button>
          <button aria-label="Obnovit" className="flex h-[31px] w-[35px] items-center justify-center border border-[#b9bfc6] bg-[#fcfcfc]">
            <svg viewBox="0 0 22 20" className="h-5 w-[22px]">
              <path d="M1 12Q0 2 12 3V0l8 6-7 5V8Q4 6 3 12z" fill="#1795ba" stroke="#0a5a78" strokeWidth="0.600" />
              <path d="M21 8q1 10-11 9v3l-8-6 7-5v3q9 2 10-4z" fill="#1795ba" stroke="#0a5a78" strokeWidth="0.600" />
            </svg>
          </button>
        </div>
        <ul className="mr-0.5 h-[179px] shrink-0 overflow-hidden border border-[#b9bfc6] bg-[repeating-linear-gradient(#fff_0_23px,#f5f5f5_23px_46px)]">
          <li className="flex h-[23px] items-center pl-[5px]">
            <span className="w-4">{chevron(false)}</span>
            <svg viewBox="0 0 16 16" className="mr-1 size-4"><path d="M8 0l2 5h6l-5 4 2 6-5-3-5 3 2-6-5-4h6z" fill="#2ab4dc" stroke="#147a9a" strokeWidth="0.600" /><path d="M6 11h3v4H6z" fill="#e01e1e" /><path d="M9 11h3v4H9z" fill="#3da33a" /><path d="M12 11h4v4h-4z" fill="#2a45a0" /></svg>
            Oblíbené
          </li>
          <li className="flex h-[23px] items-center pl-[5px]">
            <span className="w-4">{chevron(false)}</span>
            <svg viewBox="0 0 16 14" className="mr-1 h-3.5 w-4"><path d="M0 2h2l1-2h2l2 3h9v11H0z" fill="url(#gold)" stroke="#d9921a" strokeWidth="0.600" /></svg>
            (C:)
          </li>
        </ul>
        <div className="mr-0.5 flex grow flex-col pt-2">
          <Fold title="Hledat" />
          <div className="mt-0.5 flex grow flex-col">
            <Fold title="Seznam souborů" open />
            <div className="flex h-[38px] shrink-0 items-center gap-[3px] border-x border-b border-[#b9bfc6] bg-[#dde2e9] px-0.5">
              <button aria-label="Zobrazení" className="flex h-[31px] w-[49px] items-center justify-between border border-[#b9bfc6] bg-[#fcfcfc] px-1">
                <svg viewBox="0 0 22 20" className="h-5 w-[22px]">
                  <path d="M6 3h16M6 10h16M6 17h16" stroke="#777" />
                  <path d="M1 1h5v4H1zM12 8h5v4h-5z" fill="#f5a623" stroke="#8a4a0a" strokeWidth="0.600" />
                  <path d="M12 1h5v4h-5zM1 8h5v4H1zM12 15h5v4h-5z" fill="#1795ba" stroke="#0a4e68" strokeWidth="0.600" />
                  <path d="M1 15h5v4H1z" fill="#c8404a" />
                </svg>
                <Caret />
              </button>
              <SelectBox label="Typ souborů" value="All Support Files" className="h-8 grow" />
            </div>
            <div className="min-h-[100px] grow border-x border-[#b9bfc6] bg-white" />
            <div className="flex h-9 shrink-0 items-center gap-1 border border-[#b9bfc6] bg-[#dde2e9] px-0.5">
              <label htmlFor="objects">Seznam objektů</label>
              <SelectBox id="objects" label="Seznam objektů" value="" className="h-8 grow" />
            </div>
            <div className="mt-0.5 flex h-[70px] shrink-0 flex-col">
              <Fold title="Náhled" />
            </div>
          </div>
        </div>
      </div>
      <div className="flex w-[21px] shrink-0 flex-col overflow-hidden border-t border-[#b9bfc6]">
        <button aria-label="Soubory" className="ml-px h-[59px] shrink-0 border-b border-[#b9bfc6] bg-[#fcfcfc] pl-1"><Ico size="size-[26px]">{bigFolder}</Ico></button>
        <button aria-label="Knihovna" className="mt-3 ml-[5px]">
          <Ico size="size-[30px]"><path d="M1 5h22v24H1z" fill="#ffc61a" stroke="#c8741a" /><path d="M2 2h8v5H2z" fill="#d98a4a" stroke="#a8601a" /><path d="M5 27l16-18" stroke="#147a9a" strokeWidth="6" /><circle cx="6" cy="26" r="5" fill="#1795ba" stroke="#0a4e68" /><circle cx="20" cy="8" r="4" fill="#6fdcf2" stroke="#0a4e68" /></Ico>
        </button>
        <button aria-label="Knihy" className="mt-8 ml-[5px]">
          <Ico size="size-7"><path d="M1 14l20 12 10-6M1 18l20 12" stroke="#3d8ba3" strokeWidth="2" fill="none" /><path d="M1 5q5 6 12 2l10-5h8v18l-10 5Q4 20 1 5z" fill="#4fc8b0" stroke="#1d7f6c" /></Ico>
        </button>
        <button aria-label="Oblíbené" className="mt-8 ml-[5px]"><Ico size="size-[26px]">{bigFolder}<circle cx="24" cy="18" r="9" fill="#fff" stroke="#333" /><path d="M24 10v16a8 8 0 0 1 0-16z" fill="#c8202c" /></Ico></button>
        <button aria-label="Vrstvy" className="mt-8 ml-[5px]">
          <Ico size="size-[26px]"><path d="M1 12q4-4 8-5V2l8-2 3 4h11v10l-16 4Q5 17 1 12z" fill="#1795ba" stroke="#0a4e68" /><path d="M10 19h10v9H10z" fill="#e01e1e" /><path d="M20 19h8v9h-8z" fill="#3da33a" /></Ico>
        </button>
      </div>
    </div>
    <div className="pr-px pl-[5px]">
      <DockTitle title="Výstup">
        <span className="mr-1 size-2 bg-[#1f1f1f]" /><PinGlyph /><span className="h-3 w-[3px] border border-r-0 border-[#a3a6a9]" />
      </DockTitle>
    </div>
    <div className="mb-0.5 ml-px h-[81px] shrink-0 overflow-hidden border border-r-0 border-[#b9bfc6] bg-white pt-px pl-1 text-black">
      {log.map((l) => (
        <p key={l.text} className={`leading-[15px] whitespace-nowrap ${l.note ? 'text-[#0a6e0a]' : ''}`}>{l.text}</p>
      ))}
    </div>
  </aside>
);

export default function App() {
  return (
    <div className="relative flex h-screen min-h-[900px] flex-col overflow-hidden bg-[#e8eaec] font-['Open_Sans','Noto_Sans',sans-serif] text-[11px] leading-4 text-[#1f1f1f]">
      <Defs />
      <TitleBar />
      <TabBar />
      <Ribbon />
      <div className="flex min-h-0 grow">
        <Manager />
        <Viewport />
        <div className="w-1 shrink-0" />
        <FileBrowser />
      </div>
      <ProfilDialog />
    </div>
  );
}
